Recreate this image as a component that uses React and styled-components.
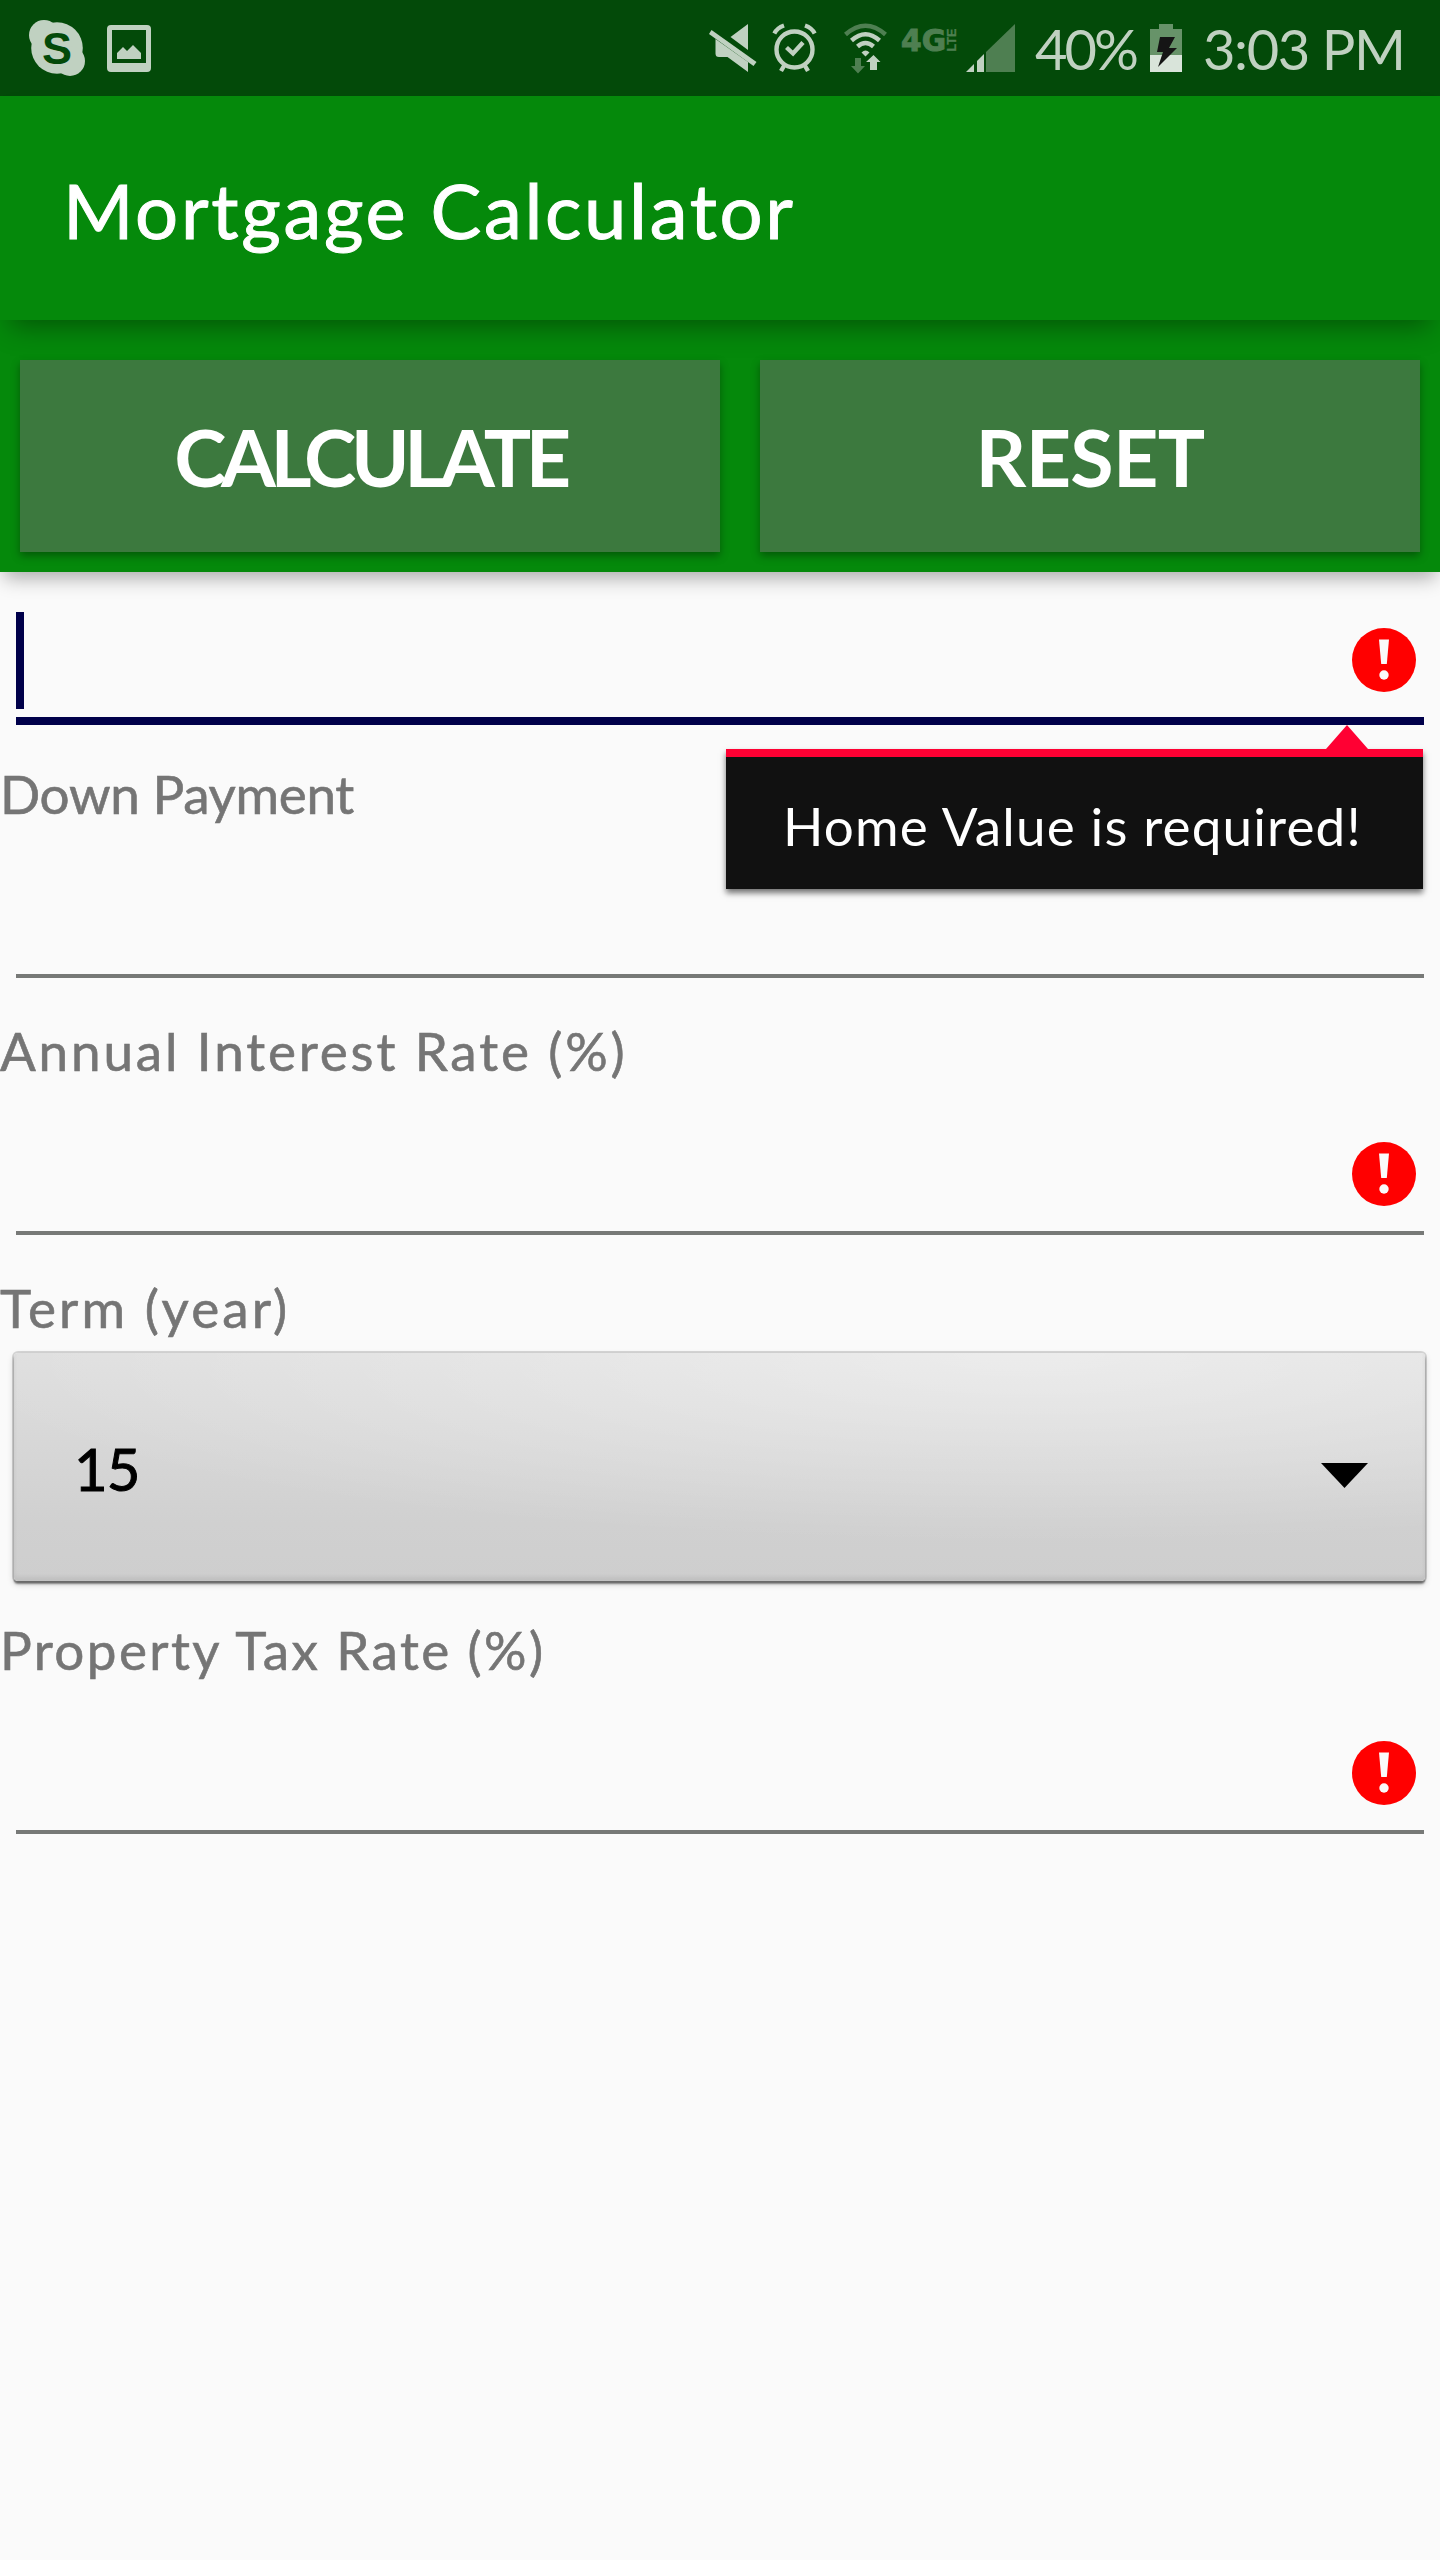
import React from "react";
import styled, { createGlobalStyle } from "styled-components";

const Global = createGlobalStyle`
  html, body { margin: 0; padding: 0; background: #fafafa; }
  * { box-sizing: border-box; }
`;

const Screen = styled.div`
  width: 1440px;
  height: 2560px;
  display: flex;
  flex-direction: column;
  overflow: hidden;
  background: #fafafa;
  font-family: Lato, "Open Sans", "Liberation Sans", sans-serif;
`;

const StatusBar = styled.header`
  height: 96px;
  flex: none;
  display: flex;
  align-items: center;
  padding: 0 41px 0 29px;
  background: #034a09;
  color: #c0d1c1;
`;

const Glyph = styled.svg`
  display: block;
  flex: none;
  overflow: visible;
  margin-left: ${(p) => p.$gap || 0}px;
`;

const Spacer = styled.div`
  flex: 1;
`;

const StatusText = styled.span`
  flex: none;
  width: ${(p) => p.$width}px;
  margin-left: ${(p) => p.$gap}px;
  font-size: 56px;
  line-height: 56px;
  padding-top: 1px;
  letter-spacing: ${(p) => p.$track}px;
  white-space: nowrap;
`;

const ActionBar = styled.div`
  position: relative;
  z-index: 2;
  height: 224px;
  flex: none;
  padding: 68px 0 0 63px;
  background: #05890b;
  box-shadow: 0 16px 26px -10px rgba(0, 0, 0, 0.38);
`;

const Title = styled.h1`
  margin: 0;
  font-size: 76px;
  line-height: 92px;
  font-weight: 400;
  letter-spacing: ${(p) => p.$track}px;
  white-space: nowrap;
  color: #fff;
  -webkit-text-stroke: 1px #fff;
`;

const ButtonBar = styled.div`
  position: relative;
  z-index: 1;
  height: 252px;
  flex: none;
  display: flex;
  gap: 40px;
  padding: 40px 20px 20px;
  background: #05890b;
  box-shadow: 0 10px 18px -4px rgba(0, 0, 0, 0.32);
`;

const Button = styled.button`
  width: ${(p) => p.$width}px;
  height: 192px;
  border: 0;
  padding: 0;
  background: #3c793e;
  color: #fff;
  font-family: inherit;
  font-size: 79px;
  font-weight: 700;
  letter-spacing: ${(p) => p.$track}px;
  box-shadow: 0 4px 8px rgba(0, 0, 0, 0.34);
`;

const Form = styled.main`
  display: flex;
  flex-direction: column;
`;

const Field = styled.div`
  position: relative;
  height: ${(p) => (p.$focused ? 153 : 154)}px;
  margin: 0 16px ${(p) => (p.$focused ? 35 : 39)}px;
  padding: 0 8px 25px 0;
  display: flex;
  align-items: flex-end;
  justify-content: flex-end;
  border-bottom: ${(p) => (p.$focused ? "8px solid #00004a" : "4px solid #777977")};
`;

const Caret = styled.div`
  width: 8px;
  height: 97px;
  margin: 0 auto -17px 0;
  background: #00004a;
`;

const Label = styled.label`
  height: 64px;
  font-size: 53px;
  line-height: 67px;
  letter-spacing: ${(p) => p.$track}px;
  white-space: nowrap;
  color: #757575;
  -webkit-text-stroke: 0.6px #757575;
`;

const Popup = styled.div`
  position: absolute;
  z-index: 3;
  top: 177px;
  right: 1px;
  width: 697px;
  height: 140px;
  padding-left: 57px;
  border-top: 8px solid #ff0033;
  background: #111;
  color: #fff;
  font-size: 53px;
  line-height: 138px;
  letter-spacing: ${(p) => p.$track}px;
  white-space: nowrap;
  box-shadow: 0 4px 6px rgba(0, 0, 0, 0.55);

  &::before {
    content: "";
    position: absolute;
    top: -32px;
    right: 55px;
    border: solid transparent;
    border-width: 0 21px 24px;
    border-bottom-color: #ff0033;
  }
`;

const Spinner = styled.div`
  height: 228px;
  margin: 15px 15px 35px 14px;
  padding: 0 57px 0 60px;
  display: flex;
  align-items: center;
  justify-content: space-between;
  border-radius: 4px;
  background:
    radial-gradient(ellipse 1100px 190px at 72% 0, rgba(255, 255, 255, 0.42), rgba(255, 255, 255, 0)),
    linear-gradient(#dfdfdf, #d8d8d8 35%, #d0d0d0 75%, #cecece);
  box-shadow:
    0 0 0 2px rgba(0, 0, 0, 0.14),
    0 3px 2px rgba(0, 0, 0, 0.42),
    0 3px 7px rgba(0, 0, 0, 0.2),
    inset 0 -4px 4px rgba(0, 0, 0, 0.07);

  svg {
    margin-top: 16px;
  }
`;

const SpinnerValue = styled.span`
  font-size: 58px;
  line-height: 70px;
  padding-top: 4px;
  letter-spacing: ${(p) => p.$track}px;
  color: #000;
  -webkit-text-stroke: 1px #000;
`;

const SkypeIcon = () => (
  <Glyph width="56" height="56" viewBox="0 0 56 56" fill="#c0d1c1">
    <circle cx="28" cy="28" r="25.8" />
    <circle cx="15" cy="15" r="15" />
    <circle cx="41" cy="41" r="15" />
    <text x="28" y="43.500" textAnchor="middle" fontFamily="Liberation Sans, sans-serif" fontWeight="700" fontSize="45" fill="#034a09">S</text>
  </Glyph>
);

const PictureIcon = () => (
  <Glyph $gap={22} width="44" height="47" viewBox="0 0 44 47" fill="#c0d1c1">
    <path fillRule="evenodd" d="M4 0H40Q44 0 44 4V43Q44 47 40 47H4Q0 47 0 43V4Q0 0 4 0ZM5 5V38H39V5Z" />
    <path d="M10 34V28L16 22L20 26L26 20L34 28V34Z" />
  </Glyph>
);

const MuteIcon = () => (
  <Glyph width="48" height="48" viewBox="0 0 48 48" fill="#c0d1c1">
    <path d="M39 0V26L21.500 13Z" />
    <path d="M6.500 15L39 38V48L18.500 33H10Q6.500 33 6.500 29.500Z" />
    <path d="M2.500 6L47.500 38L44.500 42L0 10Z" />
  </Glyph>
);

const AlarmIcon = () => (
  <Glyph $gap={16} width="43" height="48" viewBox="0 0 43 48" fill="none" stroke="#c0d1c1">
    <circle cx="21.500" cy="25.500" r="18" strokeWidth="4.400" />
    <path d="M13.500 23.500L20 29.500L30 18.500" strokeWidth="4.400" />
    <path d="M1.300 9.500Q4 4 11 1.500M41.700 9.500Q39 4 32 1.500" strokeWidth="4.200" />
    <path d="M11.500 41L8 47M31.500 41L35 47" strokeWidth="4.400" />
  </Glyph>
);

const WifiIcon = () => (
  <Glyph $gap={28} width="43" height="49" viewBox="0 0 43 49" fill="none" stroke="#c0d1c1">
    <path d="M1.500 10.500Q21.500 -7 41.500 10.500" stroke="#4e7f51" strokeWidth="4.500" />
    <path d="M7.500 16.500Q21.500 4 35.500 16.500" strokeWidth="4.500" />
    <path d="M13.500 22.500Q21.500 15.500 29.500 22.500" strokeWidth="4.500" />
    <path d="M17.500 28.500Q21.500 24.500 25.500 28.500L21.500 32.500Z" fill="#c0d1c1" stroke="none" />
    <path d="M11 34H17V42H21L14 49.500L7 42H11Z" fill="#4e7f51" stroke="none" />
    <path d="M26 46V38H22L29.500 31L36.500 38H33V46Z" fill="#c0d1c1" stroke="none" />
  </Glyph>
);

const NetworkIcon = () => (
  <Glyph $gap={15} width="54" height="48" viewBox="0 0 54 48" fill="#4e7f51" stroke="#4e7f51" fontWeight="700">
    <text x="-1" y="26.500" fontFamily="DejaVu Sans, sans-serif" fontSize="30" strokeWidth="1" textLength="45" lengthAdjust="spacingAndGlyphs">4G</text>
    <text transform="translate(54 27.500) rotate(-90)" fontFamily="Liberation Sans, sans-serif" fontSize="13" strokeWidth="0.300" textLength="23" lengthAdjust="spacingAndGlyphs">LTE</text>
  </Glyph>
);

const SignalIcon = () => (
  <Glyph $gap={10} width="49" height="48" viewBox="0 0 49 48" fill="#c0d1c1">
    <path d="M0 48L8 40V48Z" />
    <path d="M11 48V37L18 30V48Z" />
    <path d="M20 48V28L49 0V48Z" fill="#4e7f51" />
  </Glyph>
);

const BatteryIcon = () => (
  <Glyph $gap={13} width="32" height="48" viewBox="0 0 32 48">
    <path d="M9 0H23V5H32V31H0V5H9Z" fill="#679369" />
    <path d="M0 31H32V48H0Z" fill="#d9e4da" />
    <path d="M10 13H25L19 24H27L8 43L13 28H7Z" fill="#151515" />
  </Glyph>
);

const ErrorIcon = () => (
  <Glyph width="64" height="64" viewBox="0 0 64 64">
    <circle cx="32" cy="32" r="32" fill="#f00" />
    <path d="M27 11.500H37L34.800 36H29.200Z" fill="#fafafa" />
    <circle cx="32" cy="47" r="4.700" fill="#fafafa" />
  </Glyph>
);

const DropArrow = () => (
  <Glyph width="47" height="25" viewBox="0 0 47 25">
    <path d="M0 0H47L23.500 25Z" fill="#000" />
  </Glyph>
);

export default function App() {
  return (
    <Screen>
      <Global />
      <StatusBar>
        <SkypeIcon />
        <PictureIcon />
        <Spacer />
        <MuteIcon />
        <AlarmIcon />
        <WifiIcon />
        <NetworkIcon />
        <SignalIcon />
        <StatusText $gap={20} $width={102} $track={-3}>40%</StatusText>
        <BatteryIcon />
        <StatusText $gap={21} $width={196} $track={-1.4}>3:03 PM</StatusText>
      </StatusBar>
      <ActionBar>
        <Title $track={2.7}>Mortgage Calculator</Title>
      </ActionBar>
      <ButtonBar>
        <Button $width={700} $track={-5.4}>CALCULATE</Button>
        <Button $width={660} $track={-0.7}>RESET</Button>
      </ButtonBar>
      <Form>
        <Field $focused>
          <Caret />
          <ErrorIcon />
          <Popup $track={1.15}>Home Value is required!</Popup>
        </Field>
        <Label $track={-0.35}>Down Payment</Label>
        <Field />
        <Label $track={2.85}>Annual Interest Rate (%)</Label>
        <Field>
          <ErrorIcon />
        </Field>
        <Label $track={3.1}>Term (year)</Label>
        <Spinner>
          <SpinnerValue $track={-1}>15</SpinnerValue>
          <DropArrow />
        </Spinner>
        <Label $track={2.4}>Property Tax Rate (%)</Label>
        <Field>
          <ErrorIcon />
        </Field>
      </Form>
    </Screen>
  );
}
